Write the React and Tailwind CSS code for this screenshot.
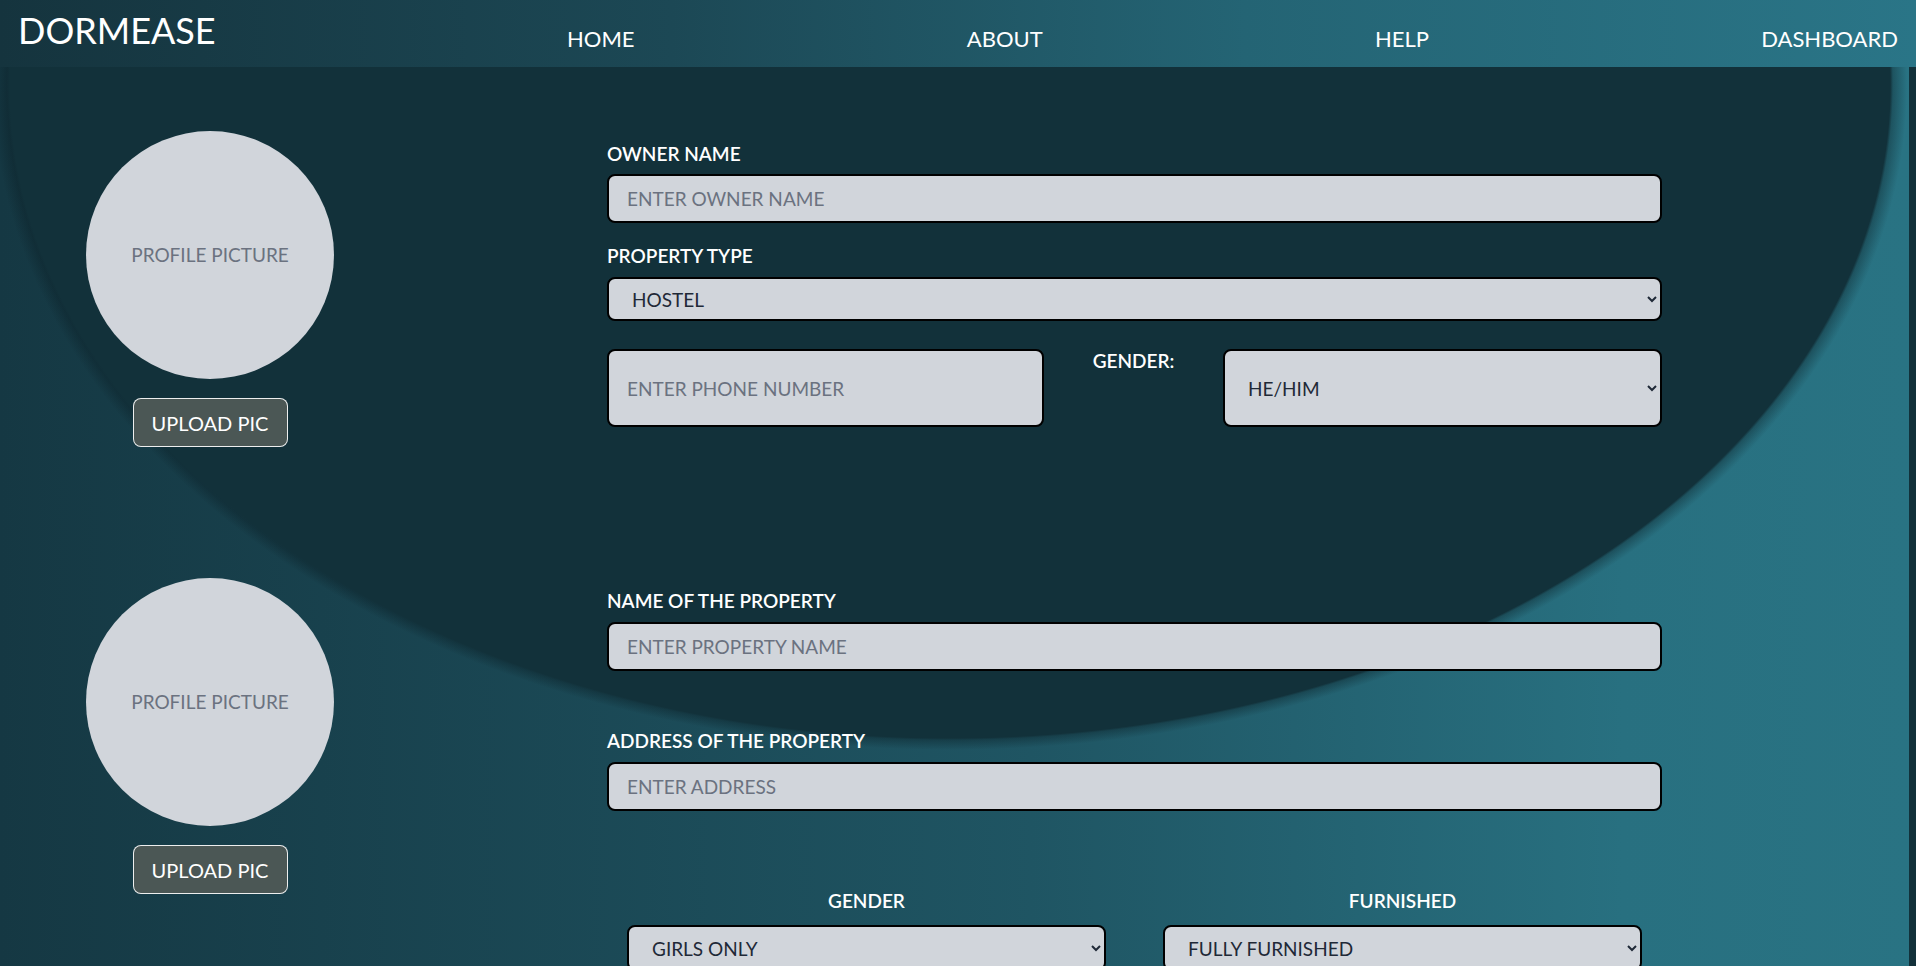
import React from "react";

const inputCls =
  "w-full h-[49px] rounded-lg border-2 border-black bg-[#d1d5db] px-[18px] text-[19px] text-[#1f2937] placeholder:text-[#6b7280] outline-none";
const selectCls =
  "w-full rounded-lg border-2 border-black bg-[#d1d5db] pl-[19px] pr-[6px] text-[19px] text-[#1f2937] outline-none";
const labelCls = "block text-[19px] leading-[24px] font-semibold text-white";

function Avatar() {
  return (
    <div className="flex flex-col items-center">
      <div className="w-[248px] h-[248px] rounded-full bg-[#d1d5db] flex items-center justify-center">
        <span className="text-[19px] text-[#6b7280]">PROFILE PICTURE</span>
      </div>
      <button className="mt-[19px] w-[155px] h-[49px] rounded-lg border border-white/90 bg-[#4b5755] text-[20px] text-white">
        UPLOAD PIC
      </button>
    </div>
  );
}

export default function App() {
  return (
    <div className="min-h-[966px] font-[Lato,sans-serif] bg-[#12313a]">
      <nav className="h-[67px] flex items-start bg-[linear-gradient(to_right,#15343e,#1c4855_35%,#246474_65%,#2a7587)] pl-[18px] pr-[18px]">
        <div className="mt-[9px] text-[36px] leading-[43px] text-white w-[549px]">DORMEASE</div>
        <div className="flex-1 flex justify-between pt-[26px] text-[22px] leading-[26px] text-white">
          <span>HOME</span>
          <span>ABOUT</span>
          <span>HELP</span>
          <span>DASHBOARD</span>
        </div>
      </nav>
      <div className="flex min-h-[899px]">
        <main className="flex-1 bg-[image:radial-gradient(943px_655px_at_950px_18px,#12313a_99.7%,rgba(8,24,30,0.35)_100%,rgba(8,24,30,0)_101.5%),linear-gradient(to_right,#153843_0%,#1f5563_54%,#287080_85%,#297383_100%)] pt-[64px] pb-[40px]">
          {/* Section 1 */}
          <div className="flex">
            <div className="w-[420px] flex justify-center">
              <Avatar />
            </div>
            <div className="ml-[187px] w-[1055px] pt-[11px]">
              <label className={labelCls}>OWNER NAME</label>
              <input className={`${inputCls} mt-[8px]`} placeholder="ENTER OWNER NAME" />
              <label className={`${labelCls} mt-[21px]`}>PROPERTY TYPE</label>
              <select className={`${selectCls} h-[44px] mt-[9px]`} defaultValue="HOSTEL">
                <option>HOSTEL</option>
                <option>PG</option>
                <option>FLAT</option>
              </select>
              <div className="mt-[28px] flex justify-between items-start">
                <input
                  className="w-[437px] h-[78px] rounded-lg border-2 border-black bg-[#d1d5db] px-[18px] text-[19px] text-[#1f2937] placeholder:text-[#6b7280] outline-none"
                  placeholder="ENTER PHONE NUMBER"
                />
                <span className="text-[19px] leading-[24px] font-semibold text-white">GENDER:</span>
                <select className="w-[439px] h-[78px] rounded-lg border-2 border-black bg-[#d1d5db] pl-[19px] pr-[6px] text-[19px] text-[#1f2937] outline-none" defaultValue="HE/HIM">
                  <option>HE/HIM</option>
                  <option>SHE/HER</option>
                  <option>THEY/THEM</option>
                </select>
              </div>
            </div>
          </div>

          {/* Section 2 */}
          <div className="flex mt-[131px]">
            <div className="w-[420px] flex justify-center">
              <Avatar />
            </div>
            <div className="ml-[187px] w-[1055px] pt-[11px]">
              <label className={labelCls}>NAME OF THE PROPERTY</label>
              <input className={`${inputCls} mt-[9px]`} placeholder="ENTER PROPERTY NAME" />
              <label className={`${labelCls} mt-[58px]`}>ADDRESS OF THE PROPERTY</label>
              <input className={`${inputCls} mt-[9px]`} placeholder="ENTER ADDRESS" />
              <div className="mt-[78px] px-[20px] grid grid-cols-2 gap-[57px]">
                <div className="flex flex-col items-center">
                  <span className="text-[19px] leading-[24px] font-semibold text-white">GENDER</span>
                  <select className={`${selectCls} h-[46px] mt-[12px] pl-[17px]`} defaultValue="GIRLS ONLY">
                    <option>GIRLS ONLY</option>
                    <option>BOYS ONLY</option>
                    <option>CO-ED</option>
                  </select>
                </div>
                <div className="flex flex-col items-center">
                  <span className="text-[19px] leading-[24px] font-semibold text-white">FURNISHED</span>
                  <select className={`${selectCls} h-[46px] mt-[12px] pl-[17px]`} defaultValue="FULLY FURNISHED">
                    <option>FULLY FURNISHED</option>
                    <option>SEMI FURNISHED</option>
                    <option>UNFURNISHED</option>
                  </select>
                </div>
              </div>
            </div>
          </div>
        </main>
        <div className="w-[7px] bg-[#12313a]" />
      </div>
    </div>
  );
}
